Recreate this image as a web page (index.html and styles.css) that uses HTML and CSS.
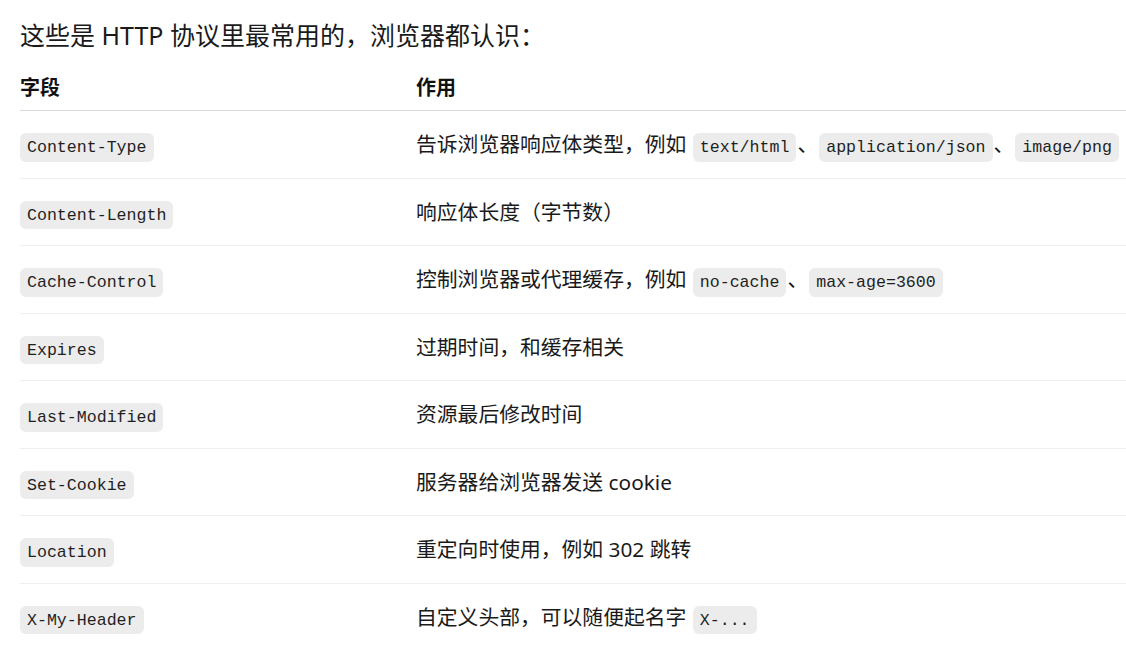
FILE: index.html
```html
<!DOCTYPE html>
<html lang="zh-CN">
<head>
<meta charset="utf-8">
<title>HTTP 常用响应头</title>
<link rel="stylesheet" href="styles.css">
</head>
<body>
<div class="page">
  <p class="intro">这些是 HTTP 协议里最常用的，浏览器都认识：</p>
  <table class="fields">
    <thead>
      <tr><th class="col-name">字段</th><th>作用</th></tr>
    </thead>
    <tbody>
      <tr><td><code>Content-Type</code></td><td>告诉浏览器响应体类型，例如 <code>text/html</code>、<code>application/json</code>、<code>image/png</code></td></tr>
      <tr><td><code>Content-Length</code></td><td>响应体长度（字节数）</td></tr>
      <tr><td><code>Cache-Control</code></td><td>控制浏览器或代理缓存，例如 <code>no-cache</code>、<code>max-age=3600</code></td></tr>
      <tr><td><code>Expires</code></td><td>过期时间，和缓存相关</td></tr>
      <tr><td><code>Last-Modified</code></td><td>资源最后修改时间</td></tr>
      <tr><td><code>Set-Cookie</code></td><td>服务器给浏览器发送 cookie</td></tr>
      <tr><td><code>Location</code></td><td>重定向时使用，例如 302 跳转</td></tr>
      <tr><td><code>X-My-Header</code></td><td>自定义头部，可以随便起名字 <code>X-...</code></td></tr>
    </tbody>
  </table>
</div>
</body>
</html>
```
FILE: styles.css
```css
html, body {
  margin: 0;
  background: #ffffff;
}
body {
  font-family: "Noto Sans", "Noto Sans CJK SC", sans-serif;
  color: #1a1a1a;
  overflow: hidden;
}
.page {
  padding: 17px 0 0 20px;
}
.intro {
  font-size: 25px;
  line-height: 36px;
  margin: 0 0 12px;
  white-space: nowrap;
}
.fields {
  width: 100%;
  border-collapse: collapse;
}
.fields th {
  text-align: left;
  font-size: 20px;
  font-weight: 700;
  line-height: 30px;
  padding: 8px 0 7px;
  color: #111111;
  border-bottom: 1px solid #d9d9d9;
}
.fields .col-name {
  width: 396px;
}
.fields td {
  font-size: 20.8px;
  line-height: 30.5px;
  padding: 18px 0;
  border-bottom: 1px solid #efefef;
  vertical-align: middle;
  white-space: nowrap;
}
.fields tbody tr:last-child td {
  border-bottom: none;
}
code {
  font-family: "Liberation Mono", "DejaVu Sans Mono", monospace;
  font-size: 16.6px;
  line-height: 1;
  padding: 4.6px 7px;
  margin: 0 1px;
  background: #ececec;
  color: #1f1f1f;
  border-radius: 6px;
  vertical-align: baseline;
}
.fields td:first-child code {
  margin-left: 0;
}
```
